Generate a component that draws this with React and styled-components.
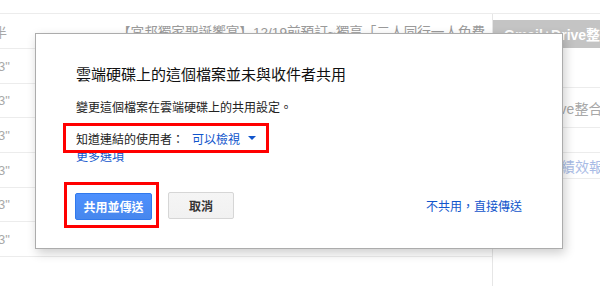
import React from "react"
import styled, { createGlobalStyle } from "styled-components"

const GlobalStyle = createGlobalStyle`
  html, body {
    margin: 0;
    padding: 0;
    background: #fff;
  }
  body {
    font-family: "Liberation Sans", "Noto Sans CJK TC", sans-serif;
  }
`

const leftRows = [
  { h: 35, lead: "半", subject: "【宮邦獨家聖誕饗宴】12/19前預訂~獨享「二人同行一人免費" },
  { h: 35, lead: '3"' },
  { h: 34, lead: '3"' },
  { h: 35, lead: '3"' },
  { h: 35, lead: '3"' },
  { h: 34, lead: '3"' },
  { h: 35, lead: '3"' }
]

const panelRows = [
  { h: 40 },
  { h: 40, text: "Gmail+Drive整合活動" },
  { h: 25 },
  { h: 26, text: "行銷活動績效報表", link: true }
]

const Page = styled.div`
  position: relative;
  width: 600px;
  height: 286px;
  overflow: hidden;
  background: #fff;
`
const TopBar = styled.div`
  height: 13px;
  border-bottom: 1px solid #ececec;
`
const Columns = styled.div`
  display: flex;
  height: 272px;
`
const MailList = styled.div`
  width: 493px;
  display: flex;
  flex-direction: column;
`
const MailRow = styled.div`
  display: flex;
  align-items: center;
  height: ${p => p.$h}px;
  box-sizing: border-box;
  border-bottom: 1px solid #ececec;
  white-space: nowrap;
  overflow: hidden;
  font-size: 13px;
  color: #a8a8a8;
`
const Lead = styled.span`
  width: ${p => p.$cjk ? 111 : 110}px;
  margin-left: ${p => p.$cjk ? -6 : -2}px;
  flex-shrink: 0;
`
const Subject = styled.span`
  margin-left: 12px;
  font-size: 13.6px;
  color: #9a9a9a;
  overflow: hidden;
`
const SidePanel = styled.div`
  width: 107px;
  border-left: 1px solid #e6e6e6;
  display: flex;
  flex-direction: column;
`
const PanelHeader = styled.div`
  margin-top: 6px;
  height: 28px;
  background: #c4c4c4;
  color: #fff;
  font-weight: bold;
  font-size: 14px;
  display: flex;
  align-items: center;
  padding-left: 11px;
  white-space: nowrap;
  overflow: hidden;
`
const PanelRow = styled.div`
  height: ${p => p.$h}px;
  box-sizing: border-box;
  border-bottom: 1px solid #ececec;
  display: flex;
  align-items: center;
  padding-left: ${p => p.$link ? 12 : 4}px;
  white-space: nowrap;
  overflow: hidden;
  font-size: 14px;
  color: ${p => p.$link ? "#a9bce6" : "#a8a8a8"};
`

const Dialog = styled.div`
  position: absolute;
  left: 35px;
  top: 33px;
  width: 528px;
  box-sizing: border-box;
  background: #fff;
  border: 1px solid #acacac;
  box-shadow: 2px 4px 10px rgba(0, 0, 0, 0.2);
  padding: 31px 40px 20px 40px;
  display: flex;
  flex-direction: column;
  color: #222;
`
const Title = styled.div`
  font-size: 15px;
  line-height: 20px;
  color: #111;
`
const Desc = styled.div`
  margin-top: 15px;
  font-size: 12px;
  line-height: 16px;
`
const Highlight = styled.div`
  position: relative;
  z-index: 1;
  border: 3px solid #f00;
  box-sizing: border-box;
  display: flex;
  align-items: center;
`
const AccessBox = styled(Highlight)`
  margin: 7px 0 0 -13px;
  width: 206px;
  height: 30px;
  padding-left: 10px;
  font-size: 12px;
`
const Access = styled.span`
  color: #1155cc;
  margin-left: 8px;
`
const Caret = styled.span`
  width: 0;
  height: 0;
  margin-left: 8px;
  border-top: 4px solid #1155cc;
  border-left: 4px solid transparent;
  border-right: 4px solid transparent;
`
const MoreLink = styled.a`
  margin-top: -4px;
  font-size: 12px;
  line-height: 16px;
  color: #1155cc;
  text-decoration: none;
`
const Actions = styled.div`
  margin-top: 17px;
  display: flex;
  align-items: center;
`
const ButtonBox = styled(Highlight)`
  margin-left: -12px;
  width: 95px;
  height: 46px;
  padding: 8px 4px 5px 8px;
`
const Button = styled.button`
  height: 27px;
  box-sizing: border-box;
  border-radius: 2px;
  font-family: inherit;
  font-size: 12px;
  font-weight: bold;
  padding: 0;
  cursor: pointer;
  width: ${p => p.$w}px;
  margin-left: ${p => p.$ml || 0}px;
  color: ${p => p.$primary ? "#fff" : "#333"};
  background: ${p => p.$primary
    ? "linear-gradient(#4d90fe, #4787ed)"
    : "linear-gradient(#f5f5f5, #f1f1f1)"};
  border: 1px solid ${p => p.$primary ? "#3079ed" : "#d6d6d6"};
`
const SkipLink = styled.a`
  margin-left: auto;
  font-size: 12px;
  color: #1155cc;
  text-decoration: none;
`

export default function App() {
  return (
    <>
      <GlobalStyle />
      <Page>
        <TopBar />
        <Columns>
          <MailList>
            {leftRows.map((row, i) => (
              <MailRow key={i} $h={row.h}>
                <Lead $cjk={!!row.subject}>{row.lead}</Lead>
                {row.subject && <Subject>{row.subject}</Subject>}
              </MailRow>
            ))}
          </MailList>
          <SidePanel>
            <PanelHeader>Gmail+Drive整合</PanelHeader>
            {panelRows.map((row, i) => (
              <PanelRow key={i} $h={row.h} $link={row.link}>{row.text}</PanelRow>
            ))}
          </SidePanel>
        </Columns>

        <Dialog>
          <Title>雲端硬碟上的這個檔案並未與收件者共用</Title>
          <Desc>變更這個檔案在雲端硬碟上的共用設定。</Desc>
          <AccessBox>
            知道連結的使用者：
            <Access>可以檢視</Access>
            <Caret />
          </AccessBox>
          <MoreLink href="#">更多選項</MoreLink>
          <Actions>
            <ButtonBox>
              <Button $primary $w={77}>共用並傳送</Button>
            </ButtonBox>
            <Button $w={66} $ml={9}>取消</Button>
            <SkipLink href="#">不共用，直接傳送</SkipLink>
          </Actions>
        </Dialog>
      </Page>
    </>
  )
}
